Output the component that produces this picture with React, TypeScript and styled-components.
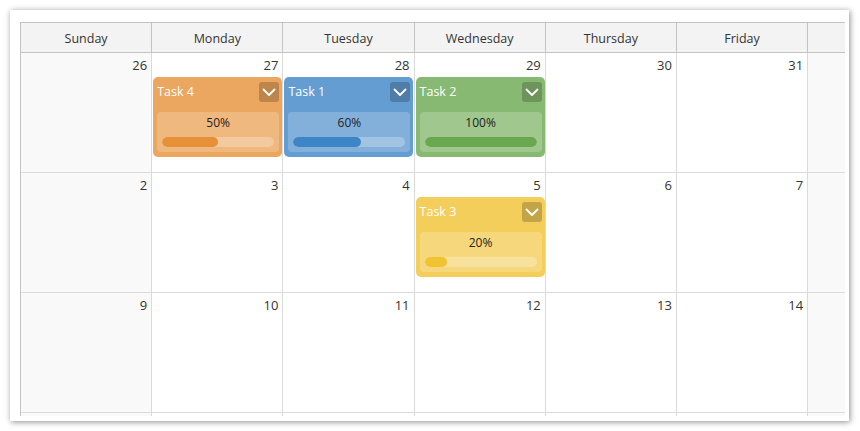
import React from "react";
import styled, { createGlobalStyle } from "styled-components";

const GlobalStyle = createGlobalStyle`
  html, body { margin: 0; padding: 0; background: #ffffff; }
  body { font-family: "Open Sans", "Noto Sans", sans-serif; color: #333; }
  * { box-sizing: border-box; }
`;

const Page = styled.div`
  padding: 10px;
  width: 860px;
  height: 431px;
`;

const Card = styled.div`
  width: 839px;
  height: 411px;
  background: #fff;
  box-shadow: 1px 1px 6px rgba(0, 0, 0, 0.45);
  padding: 12px 5px 0 10px;
`;

const Viewport = styled.div`
  width: 825px;
  height: 394px;
  overflow: hidden;
`;

const Grid = styled.div`
  display: grid;
  grid-template-columns: repeat(7, 131.2px);
  grid-template-rows: 30px repeat(4, 120px);
  width: max-content;
  border-top: 1px solid #c3c3c3;
  border-left: 1px solid #c3c3c3;
`;

const HeaderCell = styled.div`
  height: 30px;
  background: #f3f3f3;
  border-right: 1px solid #c3c3c3;
  border-bottom: 1px solid #c3c3c3;
  display: flex;
  align-items: center;
  justify-content: center;
  font-size: 12.5px;
  color: #333;
  padding-top: 1px;
`;

const DayCell = styled.div<{ $weekend: boolean }>`
  height: 120px;
  background: ${(p) => (p.$weekend ? "#f9f9f9" : "#ffffff")};
  border-right: 1px solid #dadada;
  border-bottom: 1px solid #dadada;
  display: flex;
  flex-direction: column;
`;

const DayNumber = styled.div`
  height: 24px;
  padding: 4px 4px 0 0;
  text-align: right;
  font-size: 13px;
  line-height: 17px;
  color: #333;
`;

const Event = styled.div<{ $bg: string }>`
  margin-left: 1px;
  width: 129px;
  height: 80px;
  border-radius: 5px;
  background: ${(p) => p.$bg};
  padding: 5px 3px 4px 4px;
  display: flex;
  flex-direction: column;
`;

const EventHead = styled.div`
  height: 30px;
  display: flex;
  align-items: flex-start;
  justify-content: space-between;
`;

const EventTitle = styled.div`
  color: #fff;
  font-size: 12.5px;
  line-height: 18px;
  padding-top: 1px;
`;

const MenuButton = styled.div`
  width: 20px;
  height: 20px;
  border-radius: 3px;
  background: rgba(0, 0, 0, 0.2);
  display: flex;
  align-items: center;
  justify-content: center;
`;

const Panel = styled.div`
  height: 40px;
  border-radius: 4px;
  background: rgba(255, 255, 255, 0.2);
  padding: 0 5px;
  display: flex;
  flex-direction: column;
  align-items: stretch;
`;

const Percent = styled.div`
  height: 25px;
  text-align: center;
  font-size: 12px;
  line-height: 20px;
  padding-top: 1px;
  color: #222;
`;

const Track = styled.div`
  height: 10px;
  border-radius: 5px;
  background: rgba(255, 255, 255, 0.25);
  overflow: hidden;
`;

const Fill = styled.div<{ $color: string }>`
  height: 100%;
  border-radius: 5px;
  background: ${(p) => p.$color};
`;

const Chevron = () => (
  <svg width="14" height="9" viewBox="0 0 14 9">
    <polyline points="1.5,1.5 7,7 12.5,1.5" fill="none" stroke="#fff" strokeWidth="1.8" strokeLinecap="round" strokeLinejoin="round" />
  </svg>
);

type Task = { name: string; pct: number; bg: string; fill: string };

const tasks: Record<string, Task> = {
  "0-1": { name: "Task 4", pct: 50, bg: "#eba760", fill: "#e69138" },
  "0-2": { name: "Task 1", pct: 60, bg: "#649dd1", fill: "#3d85c6" },
  "0-3": { name: "Task 2", pct: 100, bg: "#88b972", fill: "#6aa84f" },
  "1-3": { name: "Task 3", pct: 20, bg: "#f4ce5b", fill: "#f1c232" },
};

// Saturday column and the 4th week are scrolled out of view in the reference,
// so their labels are left empty.
const days = ["Sunday", "Monday", "Tuesday", "Wednesday", "Thursday", "Friday", ""];
const weeks: (number | null)[][] = [
  [26, 27, 28, 29, 30, 31, null],
  [2, 3, 4, 5, 6, 7, null],
  [9, 10, 11, 12, 13, 14, null],
  [null, null, null, null, null, null, null],
];

export default function App() {
  return (
    <>
      <GlobalStyle />
      <Page>
        <Card>
          <Viewport>
            <Grid>
              {days.map((d, i) => (
                <HeaderCell key={i}>{d}</HeaderCell>
              ))}
              {weeks.map((w, wi) =>
                w.map((n, di) => {
                  const t = tasks[`${wi}-${di}`];
                  return (
                    <DayCell key={`${wi}-${di}`} $weekend={di === 0 || di === 6}>
                      <DayNumber>{n ?? ""}</DayNumber>
                      {t && (
                        <Event $bg={t.bg}>
                          <EventHead>
                            <EventTitle>{t.name}</EventTitle>
                            <MenuButton>
                              <Chevron />
                            </MenuButton>
                          </EventHead>
                          <Panel>
                            <Percent>{t.pct}%</Percent>
                            <Track>
                              <Fill $color={t.fill} style={{ width: `${t.pct}%` }} />
                            </Track>
                          </Panel>
                        </Event>
                      )}
                    </DayCell>
                  );
                })
              )}
            </Grid>
          </Viewport>
        </Card>
      </Page>
    </>
  );
}
